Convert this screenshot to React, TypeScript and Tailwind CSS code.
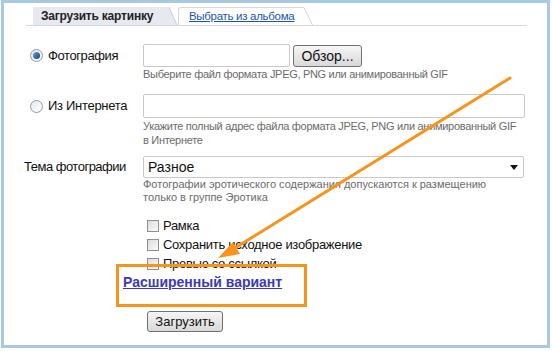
import React from "react"

const font = { fontFamily: '"Liberation Sans", Arial, sans-serif' }

function Radio({ checked }: { checked?: boolean }) {
  return (
    <span className="flex h-[13px] w-[13px] items-center justify-center rounded-full border border-[#8f9aa8] bg-gradient-to-br from-[#e4e8ee] to-[#ffffff]">
      {checked && (
        <span className="h-[7px] w-[7px] rounded-full bg-gradient-to-br from-[#6aa3e0] to-[#123e7a]" />
      )}
    </span>
  )
}

function Check({ label }: { label: string }) {
  return (
    <div className="flex h-[19px] items-center">
      <span className="h-[12px] w-[12px] border border-[#8e8f8f] bg-gradient-to-br from-[#dcdcdc] to-[#fbfbfb]" />
      <span className="ml-[4px] text-[13px] tracking-[-0.3px] text-[#111]">{label}</span>
    </div>
  )
}

function Hint({ children, cls }: { children: React.ReactNode; cls: string }) {
  return <div className={`whitespace-nowrap text-[11px] text-[#6b6b6b] ${cls}`}>{children}</div>
}

export default function App() {
  return (
    <div className="relative h-[351px] w-[552px] bg-white" style={font}>
      <div className="ml-[1px] h-[348px] w-[549px] border-[3px] border-[#a9c8e1]">
        {/* tabs */}
        <div className="mt-[4px] ml-[22px] mr-[20px] flex h-[19px] items-end border-b border-[#d4d7dc]">
          <div className="relative ml-[7px] flex h-[18px] w-[134px] items-center bg-[#e6e9ef] pl-[8px] text-[12px] font-bold tracking-[-0.2px] text-[#222]">
            Загрузить картинку
            <svg className="absolute -right-[10px] top-0" width="10" height="18" viewBox="0 0 10 18">
              <path d="M0 0 L2 0 L10 18 L0 18 Z" fill="#e6e9ef" />
              <path d="M2 0 L10 18" stroke="#c9ced6" strokeWidth="1" />
            </svg>
          </div>
          <div className="relative ml-[11px] flex h-[18px] w-[124px] items-center rounded-tl-[3px] border-l border-t border-[#d4d7dc] bg-white pl-[10px] text-[11.5px] tracking-[-0.3px] text-[#1d57a8] underline">
            Выбрать из альбома
            <svg className="absolute -right-[12px] -top-[1px]" width="12" height="19" viewBox="0 0 12 19">
              <path d="M0 0.5 L2 0.5 L11 19" stroke="#d4d7dc" strokeWidth="1" fill="white" />
            </svg>
          </div>
        </div>

        {/* photo row */}
        <div className="mt-[18px] flex">
          <div className="flex h-[23px] w-[139px] items-center pl-[26px]">
            <Radio checked />
            <span className="ml-[5px] text-[13px] tracking-[-0.4px] text-[#111]">Фотография</span>
          </div>
          <div>
            <div className="flex h-[23px] items-center gap-[3px]">
              <div className="h-[23px] w-[147px] rounded-[2px] border border-[#c9c9c9] bg-white" />
              <button className="h-[22px] w-[69px] rounded-[3px] border border-[#707070] bg-gradient-to-b from-[#f6f6f6] to-[#d9d9d9] text-[14px] text-[#111]">
                Обзор...
              </button>
            </div>
            <Hint cls="mt-[1px] leading-[13px] tracking-[-0.3px]">Выберите файл формата JPEG, PNG или анимированный GIF</Hint>
          </div>
        </div>

        {/* url row */}
        <div className="mt-[13px] flex">
          <div className="flex h-[24px] w-[139px] items-center pl-[26px]">
            <Radio />
            <span className="ml-[5px] text-[13px] tracking-[-0.3px] text-[#111]">Из Интернета</span>
          </div>
          <div>
            <div className="h-[24px] w-[382px] rounded-[2px] border border-[#c9c9c9] bg-white" />
            <Hint cls="mt-[1px] leading-[14px] tracking-[-0.3px]">
              Укажите полный адрес файла формата JPEG, PNG или анимированный GIF
              <br />в Интернете
            </Hint>
          </div>
        </div>

        {/* theme row */}
        <div className="mt-[9px] flex">
          <div className="flex h-[22px] w-[139px] items-center pl-[20px] text-[13px] tracking-[-0.5px] text-[#111]">Тема фотографии</div>
          <div>
            <div className="flex h-[22px] w-[381px] items-center justify-between rounded-[2px] border border-[#c9c9c9] bg-white pl-[4px] pr-[5px] text-[14px] text-[#111]">
              Разное
              <svg width="8" height="5" viewBox="0 0 8 5">
                <path d="M0 0 H8 L4 5 Z" fill="#111" />
              </svg>
            </div>
            <Hint cls="leading-[13px]">
              Фотографии эротического содержания допускаются к размещению
              <br />
              только в группе Эротика
            </Hint>
          </div>
        </div>

        {/* checkboxes */}
        <div className="mt-[12px] pl-[143px]">
          <Check label="Рамка" />
          <Check label="Сохранить исходное изображение" />
          <Check label="Превью со ссылкой" />
        </div>

        <div className="mt-[1px] pl-[119px] text-[14px] font-bold leading-[16px] text-[#3a3ab8] underline">
          Расширенный вариант
        </div>

        <div className="mt-[19px] pl-[143px]">
          <button className="h-[21px] w-[76px] rounded-[3px] border border-[#707070] bg-gradient-to-b from-[#f6f6f6] to-[#d9d9d9] text-[13px] text-[#111]">
            Загрузить
          </button>
        </div>
      </div>

      {/* annotation overlay */}
      <div className="absolute left-[116px] top-[264px] h-[43px] w-[191px] border-[3px] border-[#f7941d]" />
      <svg className="pointer-events-none absolute left-0 top-0" width="552" height="351">
        <line x1="510" y1="78" x2="230" y2="251" stroke="#f7941d" strokeWidth="3" strokeLinecap="round" />
        <path d="M218 258 L233 242 L240 254 Z" fill="#f7941d" />
      </svg>
    </div>
  )
}
